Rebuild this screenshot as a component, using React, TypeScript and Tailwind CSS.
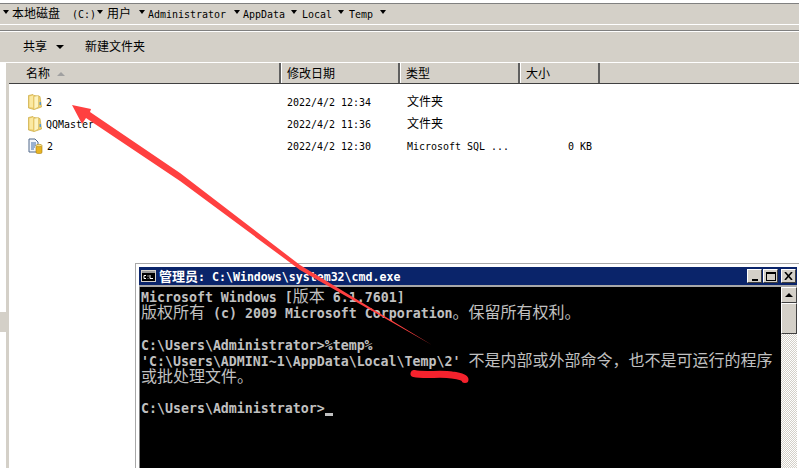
const sysFont = "font-['DejaVu_Sans_Mono','Noto_Sans_CJK_SC',monospace]"

// latin and cjk runs have different sizes in the bitmap font, so split them
function Mixed({ text, latin, cjk }: { text: string; latin: string; cjk: string }) {
  return (
    <>
      {text.split(/([^\x00-\x7f]+)/).map((part, i) => (
        <span key={i} className={i % 2 ? cjk : latin}>
          {part}
        </span>
      ))}
    </>
  )
}

function Label({ text, className = "" }: { text: string; className?: string }) {
  return (
    <span className={`whitespace-pre text-black leading-4 ${sysFont} ${className}`}>
      <Mixed text={text} latin="text-[9.96px]" cjk="text-[12px]" />
    </span>
  )
}

function Caret({ className = "" }: { className?: string }) {
  return <span className={`w-0 h-0 border-x-[3px] border-x-transparent border-t-[4px] border-t-black ${className}`} />
}

function FolderIcon() {
  return (
    <svg width="14" height="16" viewBox="0 0 14 16" className="-mt-px">
      <path d="M0.5 1.5 L5 0.5 L6 1.5 L12 2.5 L13.5 13 L6 15.5 L0.5 14 Z" fill="#efcf6f" stroke="#c9a93f" strokeWidth="0.7" />
      <path d="M6 2.5 L10.5 1.5 L10.5 13 L6 15.5 Z" fill="#fdf3c0" stroke="#d8bb5c" strokeWidth="0.6" />
      <path d="M1.5 2.5 L5 1.5 L5 13.5 L1.5 13 Z" fill="#fbe9a2" />
      <rect x="11.5" y="8" width="1.5" height="3" fill="#5b9bc8" />
    </svg>
  )
}

function SqlFileIcon() {
  return (
    <svg width="15" height="16" viewBox="0 0 15 16">
      <path d="M1 1 H7 L10 4 V14 H1 Z" fill="#f4f7fb" stroke="#51688a" strokeWidth="1" />
      <path d="M3 5 H8 M3 7 H8 M3 9 H7 M3 11 H6" stroke="#3f6aa5" strokeWidth="1" />
      <rect x="8" y="7" width="6" height="8.5" rx="1.5" fill="#e8b422" stroke="#a67c10" strokeWidth="0.6" />
      <ellipse cx="11" cy="7.5" rx="3" ry="1.2" fill="#f8e28a" stroke="#a67c10" strokeWidth="0.5" />
    </svg>
  )
}

const crumbs = [
  { text: "本地磁盘  (C:)", w: "w-[95px]", textW: "w-[85px]" },
  { text: "用户", w: "w-[41px]", textW: "w-[32px]" },
  { text: "Administrator", w: "w-[95px]", textW: "w-[86px]" },
  { text: "AppData", w: "w-[59px]", textW: "w-[48px]" },
  { text: "Local", w: "w-[47px]", textW: "w-[36px]" },
  { text: "Temp", w: "w-[40px]", textW: "w-[31px]" },
]

const columns = [
  { name: "修改日期", w: "w-[119px]" },
  { name: "类型", w: "w-[120px]" },
  { name: "大小", w: "w-[80px]" },
]

const files = [
  { name: "2", date: "2022/4/2 12:34", type: "文件夹", size: "", sql: false },
  { name: "QQMaster", date: "2022/4/2 11:36", type: "文件夹", size: "", sql: false },
  { name: "2", date: "2022/4/2 12:30", type: "Microsoft SQL ...", size: "0 KB", sql: true },
]

const consoleLines = [
  "Microsoft Windows [版本 6.1.7601]",
  "版权所有 (c) 2009 Microsoft Corporation。保留所有权利。",
  "",
  "C:\\Users\\Administrator>%temp%",
  "'C:\\Users\\ADMINI~1\\AppData\\Local\\Temp\\2' 不是内部或外部命令，也不是可运行的程序",
  "或批处理文件。",
  "",
]

function WinButton({ children, className = "" }: { children: React.ReactNode; className?: string }) {
  return (
    <div
      className={`w-[15px] h-[14px] bg-[#d4d0c8] border border-t-white border-l-white border-r-[#404040] border-b-[#404040] flex items-center justify-center ${className}`}
    >
      {children}
    </div>
  )
}

function CmdWindow() {
  return (
    <div className="absolute left-[135px] top-[263px] w-[664px] h-[205px] bg-white border-l border-t border-[#a8a8a8] flex flex-col pl-[3px] pt-[3px] pr-[2px]">
      <div className="h-[18px] bg-[#0a246a] flex items-center pl-[2px] pr-[1px]">
        <svg width="15" height="12" viewBox="0 0 15 12" className="shrink-0">
          <rect x="0.5" y="0.5" width="14" height="11" fill="#000" stroke="#d4d0c8" />
          <rect x="1" y="1" width="13" height="2" fill="#9a9a9a" />
          <path d="M3 5.5 H5 M3 5.5 V8.5 H5 M7 5.5 V6.5 M7 8 V8.5 M9 5 V8.5 H12" stroke="#fff" strokeWidth="1" fill="none" />
        </svg>
        <span className={`ml-[3px] font-bold text-white whitespace-pre leading-4 ${sysFont}`}>
          <Mixed text="管理员" latin="" cjk="text-[13px]" />
          <span className="text-[11.6px]">: C:\Windows\system32\cmd.exe</span>
        </span>
        <div className="ml-auto flex items-center">
          <WinButton>
            <span className="w-[6px] h-[2px] bg-black mt-[7px]" />
          </WinButton>
          <WinButton className="ml-px">
            <span className="w-[10px] h-[9px] border border-black border-t-2" />
          </WinButton>
          <WinButton className="ml-[3px]">
            <svg width="9" height="8" viewBox="0 0 9 8">
              <path d="M1 0 L8 8 M8 0 L1 8" stroke="#000" strokeWidth="1.6" />
            </svg>
          </WinButton>
        </div>
      </div>
      <div className="h-[2px] bg-[#a8a8a8]" />
      <div className="flex-1 flex min-h-0">
        <div className={`flex-1 bg-black border-l border-[#808080] pl-px pt-[2px] text-[#c0c0c0] ${sysFont}`}>
          {consoleLines.map((line, i) => (
            <div key={i} className="h-4 leading-4 whitespace-pre overflow-visible">
              <Mixed
                text={line}
                latin="inline-block leading-[14px] text-[13.28px] font-bold"
                cjk="inline-block leading-[14px] text-[16px]"
              />
            </div>
          ))}
          <div className="h-4 leading-4 whitespace-pre flex items-end">
            <span className="text-[13.28px] font-bold">C:\Users\Administrator&gt;</span>
            <span className="w-2 h-[3px] bg-[#c0c0c0] mb-[1px]" />
          </div>
        </div>
        <div className="w-4 flex flex-col bg-[repeating-conic-gradient(#d4d0c8_0_25%,#fff_0_50%)] bg-[length:2px_2px]">
          <div className="h-[16px] bg-[#d4d0c8] border border-t-white border-l-white border-r-[#404040] border-b-[#404040] flex items-center justify-center">
            <span className="w-0 h-0 border-x-[4px] border-x-transparent border-b-[4px] border-b-black" />
          </div>
          <div className="h-[31px] bg-[#d4d0c8] border border-t-white border-l-white border-r-[#404040] border-b-[#404040]" />
        </div>
      </div>
    </div>
  )
}

export default function App() {
  return (
    <div className="relative w-[799px] h-[468px] overflow-hidden bg-white">
      {/* address bar */}
      <div className="h-[3px]" />
      <div className="h-[22px] bg-[#d4d0c8] border-t border-[#808080] border-b border-b-white flex items-center pl-[3px] pb-[4px]">
        <Caret className="mr-[3px]" />
        {crumbs.map((c) => (
          <div key={c.text} className={`${c.w} flex items-center shrink-0`}>
            <div className={`${c.textW} h-4 leading-4`}>
              <Label text={c.text} />
            </div>
            <Caret />
          </div>
        ))}
      </div>
      <div className="h-[5px] bg-[#d4d0c8]" />

      {/* toolbar */}
      <div className="h-[33px] bg-[#d4d0c8] border-t border-[#808080] border-b border-b-white">
        <div className="h-full border-t border-white flex items-center pl-[23px]">
          <Label text="共享" />
          <Caret className="ml-[9px] border-x-[4px]" />
          <Label text="新建文件夹" className="ml-[21px]" />
        </div>
      </div>

      <div className="flex">
        <div className="w-[6px] flex flex-col">
          <div className="h-[249px]" />
          <div className="h-[20px] bg-[#d4d0c8]" />
        </div>
        <div className="w-[3px] h-[405px] bg-[#d4d0c8]" />
        <div className="flex-1">
          {/* column headers */}
          <div className="h-[21px] flex bg-[#d4d0c8] border-b border-[#404040]">
            <div className="w-[272px] shrink-0 flex items-center pt-[2px] pl-[17px] border-r-2 border-r-[#606060]">
              <Label text="名称" />
              <span className="ml-[7px] w-0 h-0 border-x-[4px] border-x-transparent border-b-[4px] border-b-[#a0a0a0]" />
            </div>
            {columns.map((c) => (
              <div key={c.name} className={`${c.w} shrink-0 flex items-center pt-[2px] pl-[5px] border-l border-l-white border-r-2 border-r-[#606060]`}>
                <Label text={c.name} />
              </div>
            ))}
          </div>
          {/* file rows */}
          <div className="pt-[7px]">
            {files.map((f, i) => (
              <div key={i} className="h-[22px] flex items-center">
                <div className="w-[278px] shrink-0 flex items-center pl-[19px]">
                  {f.sql ? <SqlFileIcon /> : <FolderIcon />}
                  <Label text={f.name} className="ml-[4px]" />
                </div>
                <div className="w-[120px] shrink-0 flex">
                  <Label text={f.date} />
                </div>
                <div className="w-[120px] shrink-0 flex items-center">
                  <Label text={f.type} />
                </div>
                <div className="w-[65px] shrink-0 flex justify-end">
                  <Label text={f.size} />
                </div>
              </div>
            ))}
          </div>
        </div>
      </div>

      <CmdWindow />

      {/* hand drawn annotations */}
      <svg className="absolute inset-0 pointer-events-none" width="799" height="468" viewBox="0 0 799 468">
        <path d="M72 105 L91 109 L90 112 L180 173 L300 265 L432 345 L300 270 L180 181 L86 118 L82 124 Z" fill="#ff4040" />
        <path d="M414 373.5 C425 376 440 373 452 375 C460 376 465 378 465 379.5" fill="none" stroke="#f5222d" strokeWidth="7" strokeLinecap="round" />
      </svg>
    </div>
  )
}
